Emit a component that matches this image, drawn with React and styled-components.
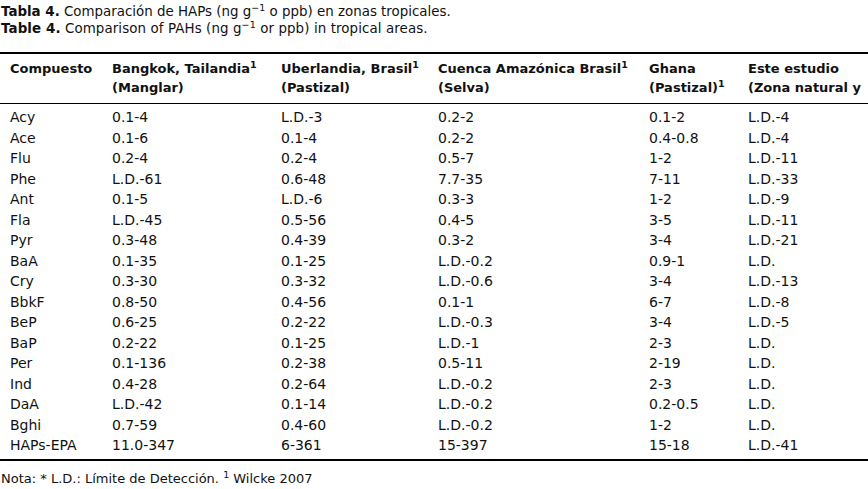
import React from "react";
import styled, { createGlobalStyle } from "styled-components";

const Global = createGlobalStyle`
  html, body { margin: 0; padding: 0; background: #fff; overflow: hidden; }
  body { font-family: "DejaVu Sans", "Liberation Sans", sans-serif; color: #111; }
`;

const Page = styled.div`
  width: 868px;
  height: 489px;
  overflow: hidden;
  background: #fff;
`;

const Caption = styled.div`
  padding: 3px 0 0 1px;
  font-size: 13.4px;
  line-height: 17px;
  white-space: nowrap;
`;

const CapLine = styled.div`
  letter-spacing: ${(p) => p.$spacing || 0}px;
`;

const Label = styled.span`
  font-weight: bold;
`;

const Sup = styled.sup`
  font-size: ${(p) => p.$size || 9.5}px;
  line-height: 0;
  vertical-align: ${(p) => p.$raise || 5}px;
`;

const Table = styled.div`
  margin-top: 15px;
  border-top: 2px solid #000;
  border-bottom: 2px solid #000;
  width: 868px;
`;

const Row = styled.div`
  display: grid;
  grid-template-columns: 112px 169px 157px 211px 99px auto;
  white-space: nowrap;
`;

const HeadRow = styled(Row)`
  padding: 6px 0 6px;
  border-bottom: 1px solid #000;
  font-weight: bold;
  font-size: 13px;
  line-height: 18.5px;
`;

const Body = styled.div`
  padding: 3px 0 3px;
  font-size: 14px;
`;

const BodyRow = styled(Row)`
  height: 20.5px;
  line-height: 20.5px;
`;

const Cell = styled.div`
  padding-left: ${(p) => (p.$first ? 10 : 0)}px;
  overflow: visible;
`;

const Note = styled.div`
  padding: 10px 0 0 1px;
  font-size: 13px;
  line-height: 16px;
  white-space: nowrap;
`;

const rows = [
  ["Acy", "0.1-4", "L.D.-3", "0.2-2", "0.1-2", "L.D.-4"],
  ["Ace", "0.1-6", "0.1-4", "0.2-2", "0.4-0.8", "L.D.-4"],
  ["Flu", "0.2-4", "0.2-4", "0.5-7", "1-2", "L.D.-11"],
  ["Phe", "L.D.-61", "0.6-48", "7.7-35", "7-11", "L.D.-33"],
  ["Ant", "0.1-5", "L.D.-6", "0.3-3", "1-2", "L.D.-9"],
  ["Fla", "L.D.-45", "0.5-56", "0.4-5", "3-5", "L.D.-11"],
  ["Pyr", "0.3-48", "0.4-39", "0.3-2", "3-4", "L.D.-21"],
  ["BaA", "0.1-35", "0.1-25", "L.D.-0.2", "0.9-1", "L.D."],
  ["Cry", "0.3-30", "0.3-32", "L.D.-0.6", "3-4", "L.D.-13"],
  ["BbkF", "0.8-50", "0.4-56", "0.1-1", "6-7", "L.D.-8"],
  ["BeP", "0.6-25", "0.2-22", "L.D.-0.3", "3-4", "L.D.-5"],
  ["BaP", "0.2-22", "0.1-25", "L.D.-1", "2-3", "L.D."],
  ["Per", "0.1-136", "0.2-38", "0.5-11", "2-19", "L.D."],
  ["Ind", "0.4-28", "0.2-64", "L.D.-0.2", "2-3", "L.D."],
  ["DaA", "L.D.-42", "0.1-14", "L.D.-0.2", "0.2-0.5", "L.D."],
  ["Bghi", "0.7-59", "0.4-60", "L.D.-0.2", "1-2", "L.D."],
  ["HAPs-EPA", "11.0-347", "6-361", "15-397", "15-18", "L.D.-41"],
];

export default function App() {
  return (
    <Page>
      <Global />
      <Caption>
        <CapLine>
          <Label>Tabla 4.</Label> Comparación de HAPs (ng g<Sup>−1</Sup> o ppb) en zonas tropicales.
        </CapLine>
        <CapLine $spacing={0.1}>
          <Label>Table 4.</Label> Comparison of PAHs (ng g<Sup>−1</Sup> or ppb) in tropical areas.
        </CapLine>
      </Caption>
      <Table>
        <HeadRow>
          <Cell $first>Compuesto</Cell>
          <Cell>
            Bangkok, Tailandia<Sup>1</Sup>
            <br />
            (Manglar)
          </Cell>
          <Cell>
            Uberlandia, Brasil<Sup>1</Sup>
            <br />
            (Pastizal)
          </Cell>
          <Cell>
            Cuenca Amazónica Brasil<Sup>1</Sup>
            <br />
            (Selva)
          </Cell>
          <Cell>
            Ghana
            <br />
            (Pastizal)<Sup>1</Sup>
          </Cell>
          <Cell>
            Este estudio
            <br />
            (Zona natural y
          </Cell>
        </HeadRow>
        <Body>
          {rows.map((r) => (
            <BodyRow key={r[0]}>
              {r.map((v, i) => (
                <Cell key={i} $first={i === 0}>
                  {v}
                </Cell>
              ))}
            </BodyRow>
          ))}
        </Body>
      </Table>
      <Note>
        Nota: * L.D.: Límite de Detección. <Sup>1</Sup> Wilcke 2007
      </Note>
    </Page>
  );
}
